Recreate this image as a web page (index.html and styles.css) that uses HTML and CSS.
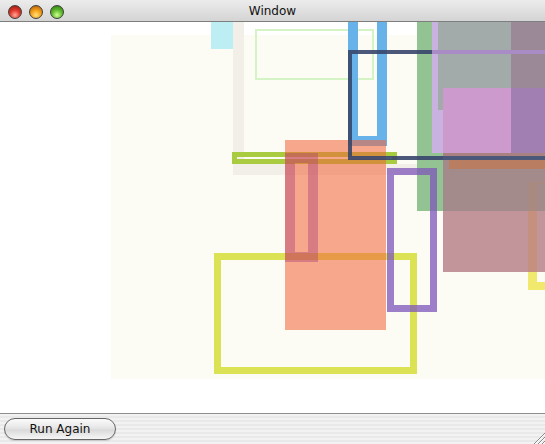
FILE: index.html
```html
<!DOCTYPE html>
<html>
<head>
<meta charset="utf-8">
<title>Window</title>
<link rel="stylesheet" href="styles.css">
</head>
<body>
<div class="window">
  <div class="titlebar">
    <div class="lights">
      <span class="light red"></span>
      <span class="light yellow"></span>
      <span class="light green"></span>
    </div>
    <div class="title">Window</div>
    <div class="spacer"></div>
  </div>
  <div class="canvas">
    <svg class="art" width="545" height="391" viewBox="0 22 545 391" xmlns="http://www.w3.org/2000/svg">
      <rect x="111" y="35" width="434" height="344" fill="#fcfcf5"/>
      <rect x="211" y="22" width="22" height="27" fill="#bdeef4"/>
      <rect x="238.5" y="0" width="188" height="169.5" fill="none" stroke="#f2eee8" stroke-width="11"/>
      <rect x="256" y="30" width="117" height="49" fill="none" stroke="#d4f4c6" stroke-width="2"/>
      <rect x="353" y="0" width="29" height="141" fill="none" stroke="#68b2ea" stroke-width="10"/>
      <rect x="234.5" y="154.5" width="160" height="7" fill="none" stroke="#a8cb40" stroke-width="5"/>
      <rect x="217.5" y="256.5" width="196" height="114" fill="none" stroke="#dbe254" stroke-width="7"/>
      <rect x="285" y="140" width="101" height="190" fill="rgba(243,102,60,0.57)"/>
      <rect x="290" y="158" width="23" height="99" fill="none" stroke="rgba(170,60,120,0.4)" stroke-width="10"/>
      <rect x="417" y="22" width="26" height="189" fill="#93c293"/>
      <rect x="350" y="52" width="250" height="106" fill="none" stroke="rgba(55,70,108,0.9)" stroke-width="4"/>
      <rect x="432" y="22" width="6" height="131" fill="#c9b1e0"/>
      <rect x="438" y="110" width="5" height="43" fill="#c9b1e0"/>
      <rect x="438" y="22" width="73" height="66" fill="#a2abaa"/>
      <rect x="438" y="88" width="5" height="22" fill="#a2abaa"/>
      <rect x="511" y="22" width="34" height="66" fill="#9b8998"/>
      <rect x="443" y="88" width="68" height="65" fill="#cd9acd"/>
      <rect x="511" y="88" width="34" height="65" fill="#a27fb2"/>
      <rect x="432" y="50" width="113" height="4" fill="#a98bc6"/>
      <rect x="443" y="153" width="102" height="3" fill="#a98181"/>
      <rect x="443" y="160" width="102" height="51" fill="#a38a8b"/>
      <rect x="449" y="160" width="96" height="9" fill="#b97d62"/>
      <rect x="443" y="211" width="102" height="61" fill="#c2959b"/>
      <rect x="528" y="182" width="17" height="2" fill="#a98a80"/>
      <rect x="528" y="182" width="9" height="29" fill="#a98a80"/>
      <rect x="528" y="211" width="9" height="61" fill="#c6907f"/>
      <rect x="528" y="272" width="9" height="18" fill="#f1e96d"/>
      <rect x="528" y="282" width="17" height="8" fill="#f1e96d"/>
      <rect x="390.5" y="171.5" width="43" height="137" fill="none" stroke="rgba(125,85,185,0.75)" stroke-width="7"/>
    </svg>
  </div>
  <div class="bottombar">
    <button class="btn">Run Again</button>
    <svg class="grip" width="12" height="12" viewBox="0 0 12 12" xmlns="http://www.w3.org/2000/svg">
      <path d="M12 1 L1 12 M12 5 L5 12 M12 9 L9 12" stroke="#8a8a8a" stroke-width="1"/>
      <path d="M12 2 L2 12 M12 6 L6 12 M12 10 L10 12" stroke="#ffffff" stroke-width="1"/>
    </svg>
  </div>
</div>
</body>
</html>
```
FILE: styles.css
```css
html, body {
  margin: 0;
  padding: 0;
  background: #ffffff;
}
.window {
  width: 545px;
  height: 444px;
  display: flex;
  flex-direction: column;
  overflow: hidden;
  font-family: "DejaVu Sans", "Liberation Sans", sans-serif;
}
.titlebar {
  height: 21px;
  border-bottom: 1px solid #7e7e7e;
  background: linear-gradient(#ececec, #d4d4d4);
  display: grid;
  grid-template-columns: 1fr auto 1fr;
  align-items: center;
}
.lights {
  display: flex;
  gap: 7px;
  padding-left: 8px;
  margin-top: 2px;
}
.light {
  width: 12px;
  height: 12px;
  border-radius: 50%;
  border: 1px solid #3e3e3e;
  box-sizing: content-box;
}
.red {
  background: radial-gradient(circle at 50% 75%, #ffa898 0%, #e2392c 45%, #8e140c 100%);
}
.yellow {
  background: radial-gradient(circle at 50% 75%, #ffe27a 0%, #f5a01a 45%, #a05206 100%);
}
.green {
  background: radial-gradient(circle at 50% 75%, #d0ff98 0%, #62be2e 45%, #26700e 100%);
}
.title {
  font-size: 12px;
  color: #111111;
  margin-top: 1px;
}
.canvas {
  height: 391px;
  background: #ffffff;
}
.art {
  display: block;
}
.bottombar {
  flex: 1;
  border-top: 1px solid #8e8e8e;
  background: repeating-linear-gradient(to bottom, #f2f2f2 0px, #f2f2f2 2px, #e9e9e9 2px, #e9e9e9 4px);
  display: flex;
  align-items: flex-start;
  justify-content: space-between;
  padding: 4px 0 0 4px;
}
.btn {
  width: 112px;
  height: 22px;
  border: 1px solid #666666;
  border-radius: 11px;
  background: linear-gradient(to bottom, #fbfbfb 0%, #e6e6e6 45%, #dadada 55%, #f6f6f6 100%);
  font-family: "DejaVu Sans", "Liberation Sans", sans-serif;
  font-size: 12px;
  color: #111111;
  padding: 0;
  box-shadow: 0 1px 1px rgba(0,0,0,0.15);
}
.grip {
  align-self: flex-end;
  display: block;
}
```
